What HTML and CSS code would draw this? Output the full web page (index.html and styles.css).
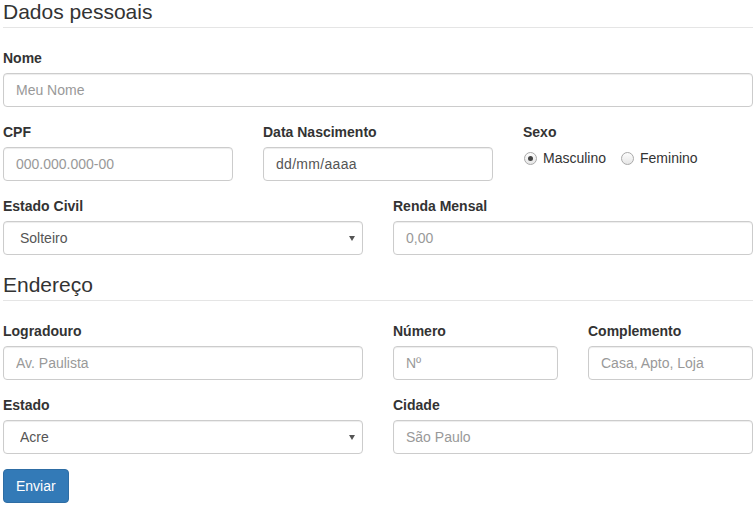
FILE: index.html
```html
<!DOCTYPE html>
<html lang="pt-BR">
<head>
<meta charset="utf-8">
<title>Formulário</title>
<link rel="stylesheet" href="styles.css">
</head>
<body>
<form class="form">
  <h2 class="legend legend-first">Dados pessoais</h2>
  <div class="group">
    <label class="label">Nome</label>
    <input class="control" type="text" placeholder="Meu Nome">
  </div>
  <div class="row row-3">
    <div class="group">
      <label class="label">CPF</label>
      <input class="control" type="text" placeholder="000.000.000-00">
    </div>
    <div class="group">
      <label class="label">Data Nascimento</label>
      <input class="control date" type="text" value="dd/mm/aaaa">
    </div>
    <div class="group">
      <label class="label">Sexo</label>
      <div class="radios">
        <label class="radio"><span class="dot checked"></span>Masculino</label>
        <label class="radio"><span class="dot"></span>Feminino</label>
      </div>
    </div>
  </div>
  <div class="row row-2">
    <div class="group">
      <label class="label">Estado Civil</label>
      <div class="select-wrap">
        <select class="control select"><option>Solteiro</option></select>
      </div>
    </div>
    <div class="group">
      <label class="label">Renda Mensal</label>
      <input class="control" type="text" placeholder="0,00">
    </div>
  </div>
  <h2 class="legend">Endereço</h2>
  <div class="row row-2">
    <div class="group">
      <label class="label">Logradouro</label>
      <input class="control" type="text" placeholder="Av. Paulista">
    </div>
    <div class="row row-2">
      <div class="group">
        <label class="label">Número</label>
        <input class="control" type="text" placeholder="Nº">
      </div>
      <div class="group">
        <label class="label">Complemento</label>
        <input class="control" type="text" placeholder="Casa, Apto, Loja">
      </div>
    </div>
  </div>
  <div class="row row-2">
    <div class="group">
      <label class="label">Estado</label>
      <div class="select-wrap">
        <select class="control select"><option>Acre</option></select>
      </div>
    </div>
    <div class="group">
      <label class="label">Cidade</label>
      <input class="control" type="text" placeholder="São Paulo">
    </div>
  </div>
  <button class="btn" type="button">Enviar</button>
</form>
</body>
</html>
```

FILE: styles.css
```css
* { box-sizing: border-box; }
html, body { margin: 0; padding: 0; background: #fff; }
body {
  font-family: "Liberation Sans", Arial, sans-serif;
  font-size: 14px;
  line-height: 20px;
  color: #333;
}
.form {
  width: 750px;
  margin-left: 3px;
}
.legend {
  margin: 0 0 20px 0;
  font-size: 21px;
  font-weight: normal;
  line-height: 30px;
  color: #333;
  border-bottom: 1px solid #e5e5e5;
}
.legend-first { margin-top: -3px; }
.group { margin-bottom: 15px; }
.row { display: grid; column-gap: 30px; }
.row-3 { grid-template-columns: repeat(3, 1fr); }
.row-2 { grid-template-columns: repeat(2, 1fr); }
.row .row .group, .row .row { margin-bottom: 0; }
.label {
  display: block;
  font-weight: bold;
  margin-bottom: 5px;
  max-width: 100%;
}
.control {
  display: block;
  width: 100%;
  height: 34px;
  padding: 6px 12px;
  font-family: inherit;
  font-size: 14px;
  line-height: 20px;
  color: #555;
  background: #fff;
  border: 1px solid #ccc;
  border-radius: 4px;
  box-shadow: inset 0 1px 1px rgba(0,0,0,.075);
  margin: 0;
}
.control::placeholder { color: #999; opacity: 1; }
.date { letter-spacing: 0.3px; }
.select-wrap { position: relative; }
.select {
  appearance: none;
  -webkit-appearance: none;
  padding-left: 16px;
}
.select-wrap::after {
  content: "";
  position: absolute;
  right: 8px;
  top: 15px;
  width: 0;
  height: 0;
  border-left: 3.5px solid transparent;
  border-right: 3.5px solid transparent;
  border-top: 5px solid #555;
  pointer-events: none;
}
.radios {
  display: flex;
  gap: 14px;
  padding-top: 1px;
}
.radio {
  display: flex;
  align-items: center;
  color: #333;
  font-weight: normal;
}
.dot {
  width: 13px;
  height: 13px;
  border-radius: 50%;
  border: 1px solid #a9a9a9;
  background: linear-gradient(#fdfdfd, #e6e6e6);
  margin: 0 6px 0 1px;
  position: relative;
}
.dot.checked::after {
  content: "";
  position: absolute;
  left: 3px;
  top: 3px;
  width: 5px;
  height: 5px;
  border-radius: 50%;
  background: #444;
}
.btn {
  display: inline-block;
  height: 34px;
  padding: 6px 12px;
  font-family: inherit;
  font-size: 14px;
  line-height: 20px;
  color: #fff;
  background: #337ab7;
  border: 1px solid #2e6da4;
  border-radius: 4px;
}
```
